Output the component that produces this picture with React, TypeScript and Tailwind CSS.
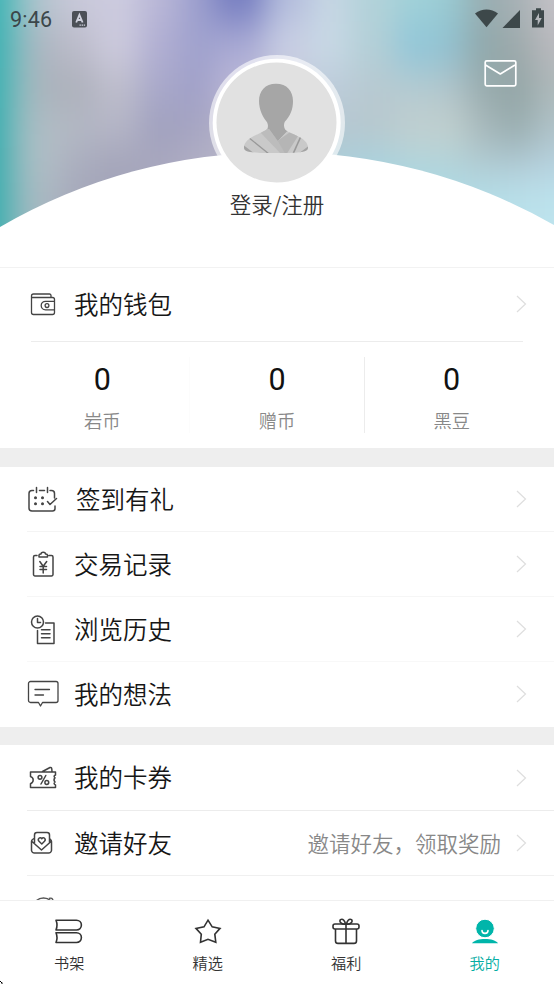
import React from "react";

const CJK = "font-['Noto_Sans_CJK_SC','Noto_Sans',sans-serif] font-[350]";

// Colour samples of the blurred cover picture, one list per horizontal band.
const columns = [-30, 8, 30, 60, 95, 140, 180, 215, 265, 310, 350, 395, 440, 468, 500, 535, 590];
const bands: { y: number; h: number; colors: string[] }[] = [
  { y: -60, h: 82, colors: ["#35b2b2", "#86c2c5", "#b9c5d0", "#c9c9da", "#cccbdf", "#b9b7d7", "#9c9fce", "#747cc0", "#b3bcdc", "#c6d6e4", "#b2d2d9", "#a0d1d8", "#98c8d0", "#98adb1", "#a7b1b5", "#c5c2c7"] },
  { y: 22, h: 46, colors: ["#35b0b1", "#86bcc0", "#b0b6c2", "#bcbcca", "#cccadd", "#b0aed2", "#9fa1cd", "#a9aad4", "#c9cfe4", "#c8d9e5", "#b3cfd7", "#90c6d8", "#92bfcd", "#8fa7aa", "#9eaaac", "#bab9be"] },
  { y: 68, h: 40, colors: ["#35afb0", "#8abcbf", "#abb3bc", "#acafba", "#bdbdcb", "#a8a8ca", "#a0a0c8", "#bdb9d7", "#c4c6d8", "#bdccdb", "#b8c9d1", "#b4cad1", "#b0c3c9", "#98abad", "#93a5a6", "#adb8b9"] },
  { y: 108, h: 40, colors: ["#35adae", "#92bcc0", "#b1bdc5", "#b3b8c4", "#b4b5c6", "#a0a0be", "#a6a5c2", "#b6b4c8", "#b8bccc", "#b4c6d1", "#b7c8ce", "#c1cfcf", "#c1cfcd", "#a7b8bb", "#99adaf", "#b0c3c9"] },
  { y: 148, h: 34, colors: ["#35acad", "#92bbbf", "#b2bec6", "#aaadbe", "#a3a4b9", "#a9a8be", "#b2b0c4", "#b5b5c7", "#b1c6d3", "#abced9", "#a9d3df", "#b0d5dd", "#b2d3da", "#b0ccd4", "#b2ccd7", "#b6d2e0"] },
  { y: 182, h: 110, colors: ["#35adad", "#8fbabf", "#acb8c2", "#a5a8ba", "#a5a6ba", "#a9a8be", "#b2b0c4", "#b5b5c7", "#b1c6d3", "#abced9", "#a9d7e2", "#aad9e4", "#b0dce7", "#b4dfe9", "#b9e1eb", "#bde3ed"] },
];

function Cover() {
  return (
    <svg className="block h-[267px] w-full" viewBox="0 0 554 267" preserveAspectRatio="none">
      <defs>
        <filter id="soft" x="-10%" y="-20%" width="120%" height="140%" colorInterpolationFilters="sRGB">
          <feGaussianBlur stdDeviation="15 19" />
        </filter>
      </defs>
      <rect width="554" height="267" fill="#b4c4d0" />
      <g filter="url(#soft)">
        {bands.map((b) =>
          b.colors.map((c, i) => {
            const first = i === 0 ? 60 : 0;
            const last = i === b.colors.length - 1 ? 60 : 0;
            return (
              <rect
                key={`${b.y}-${i}`}
                x={columns[i] - first}
                y={b.y}
                width={columns[i + 1] - columns[i] + 0.5 + first + last}
                height={b.h + 0.5}
                fill={c}
              />
            );
          })
        )}
      </g>
      <path d="M0 227A555 555 0 0 1 554 225V267H0Z" fill="#fff" />
    </svg>
  );
}

function Avatar() {
  return (
    <svg className="h-[136px] w-[136px]" viewBox="0 0 136 136">
      <defs>
        <clipPath id="robe">
          <path d="M58 74C53 79 35 82 35 92.500C35 97 41 98 67 98C93 98 99 97 99 92.500C99 82 80 79 75 74Z" />
        </clipPath>
      </defs>
      <circle cx="68" cy="68" r="68" fill="#fff" fillOpacity=".6" />
      <circle cx="67.7" cy="67.7" r="64" fill="#fff" />
      <circle cx="67.5" cy="67.5" r="60" fill="#e1e1e1" />
      <path d="M67 28.700C56 28.700 50 36 50 46C50 55 54 62 57.500 66.500C60 70 59 74 57 76L68.700 88L79 77C75 75 74 70 76 66.500C81 61 84 55 84 46C84 36 78 28.700 67 28.700Z" fill="#a6a6a6" />
      <g clipPath="url(#robe)">
        <path d="M30 72H58L68.700 85.700L80 74H102V102H30Z" fill="#c9c9c9" />
        <path d="M50 76L59 72L80 100H73Z" fill="#bcbcbc" />
        <path d="M68.700 85.700L84 75L91 78L77 100Z" fill="#b5b5b5" />
        <path d="M59 72L68.700 85.700L78 76V72Z" fill="#a6a6a6" />
        <path d="M39 82L60 99" fill="none" stroke="#999" strokeWidth="1.300" />
        <path d="M92.500 80L84 99" fill="none" stroke="#999" strokeWidth="1.600" />
        <path d="M33 89L46 99H33ZM101 90L89 99H101Z" fill="#a3a3a3" />
      </g>
    </svg>
  );
}

function StatusBar() {
  return (
    <div className="flex h-[38px] items-center pl-[10px] pr-[9px] text-[#3c474a]">
      <span className="w-[42px] pt-[2px] font-[Roboto,sans-serif] text-[21.5px] font-normal leading-none tracking-[0.2px]">9:46</span>
      <svg className="ml-[20px] h-[17px] w-[15px]" viewBox="0 0 15 17">
        <rect width="15" height="16.5" rx="2" fill="#4c5057" />
        <path d="M4.2 11.5L7.4 3.8L10.6 11.5M5.4 9H9.4" fill="none" stroke="#d0d2de" strokeWidth="1.8" />
        <path d="M7.5 14.2h1.4m.7 0H11m.7 0h1.4" stroke="#d0d2de" strokeWidth="1.3" />
      </svg>
      <svg className="ml-auto h-[22px] w-[71px]" viewBox="0 0 71 22" fill="#3d484a">
        <path d="M1 5.6C8 0 17 0 24 5.6L12.5 19.3Z" />
        <path d="M46 2V20H28.5Z" />
        <path fillRule="evenodd" d="M62 .3h5v2h3V19.5H58V2.300h4ZM65 5l-4 7h2.700v5.500l4-7.500h-2.700Z" />
      </svg>
    </div>
  );
}

function Line({ children, w = 32, h = 32, sw = 1.5 }: { children: React.ReactNode; w?: number; h?: number; sw?: number }) {
  return (
    <svg width={w} height={h} viewBox={`0 0 ${w} ${h}`} fill="none" stroke="#444" strokeWidth={sw} strokeLinecap="round" strokeLinejoin="round">
      {children}
    </svg>
  );
}

const icons = {
  wallet: (
    <Line sw={1.3}>
      <path d="M24 9.500V7.500a1.500 1.500 0 0 0-1.500-1.500H6.500a2 2 0 0 0-2 2V24.500a2 2 0 0 0 2 2H25.500a2 2 0 0 0 2-2V11.500A2 2 0 0 0 25.500 9.500H5M27.500 13.300H18.500a4.300 4.300 0 0 0 0 8.600H27.500" />
      <circle cx="20" cy="17.600" r="1.900" />
    </Line>
  ),
  calendar: (
    <Line sw={1.500}>
      <path d="M6.500 7.500H5A3 3 0 0 0 2 10.500V25a3 3 0 0 0 3 3H25.500a2.500 2.500 0 0 0 2.500-2.500V23M27.500 15V10.500A3 3 0 0 0 24.500 7.500H23M12.500 7.500H17.500M9.500 4.500V9.500M20.500 4.500V9.500M20.500 18.500L23 21.500L29.500 15.500" />
      <path d="M8.500 14.700h.01M15.500 14.700h.01M8.500 20.700h.01M15.500 20.700h.01" strokeWidth="3" />
    </Line>
  ),
  clipboard: (
    <Line>
      <path d="M10 7.500H8A1.500 1.500 0 0 0 6.500 9V26.500A1.500 1.500 0 0 0 8 28H24.500A1.500 1.500 0 0 0 26 26.500V9A1.500 1.500 0 0 0 24.500 7.500H22M12 9H20.500V7C20.500 6 19.500 6 18.500 6C18.500 3.500 14 3.500 14 6C13 6 12 6 12 7ZM12.800 13.500L16.200 18.200L19.700 13.500M16.200 18.200V25M13 18.500H19.500M13 21.500H19.500" />
    </Line>
  ),
  history: (
    <Line>
      <circle cx="10.500" cy="9" r="6" />
      <path d="M10.500 5.500V9.500H13.500M18.500 10H27V30.500H10.500V17.500M14.500 16.800H23M14.500 20.800H23M14.500 24.800H23" />
    </Line>
  ),
  comment: (
    <Line sw={1.300}>
      <path d="M3.500 3.500H29A2 2 0 0 1 31 5.500V22.500A2 2 0 0 1 29 24.500H15.500L13.500 28L11.500 24.500H3.500A2 2 0 0 1 1.500 22.500V5.500A2 2 0 0 1 3.500 3.500ZM8 11.500H22.500M8 17H16.500" />
    </Line>
  ),
  coupon: (
    <Line>
      <path d="M3.500 10H28.500V13Q26 14 28 15.800Q26 18 28 20Q26 22 28.500 23V25.500H3.500V21.800Q6.200 20.500 6.200 18Q6.200 15.500 3.500 14.500V10ZM15.500 9.500L23 5.500Q24.500 5 24.800 7L25 9.500M18.800 13.500L14 22" />
      <circle cx="13" cy="15.300" r="1.900" />
      <circle cx="19.800" cy="20.500" r="1.900" />
    </Line>
  ),
  invite: (
    <Line>
      <path d="M7.500 15.500V8A2.500 2.500 0 0 1 10 5.500H20A2.500 2.500 0 0 1 22.500 8V15.500M7 11.500L5.500 12.500Q4.500 13.500 4.500 14.500V23.500A3 3 0 0 0 7.500 26H21.500A3 3 0 0 0 24.500 23.500V14.500Q24.500 13.500 23 12L22.500 11.500M5 14.500L14.500 23L24 14.500M14.800 17L12 14.300C10 12 13 9.300 14.800 11.700C16.500 9.300 19.500 12 17.500 14.300Z" />
    </Line>
  ),
};

function Chevron() {
  return (
    <svg className="h-[18px] w-[11px] shrink-0" viewBox="0 0 11 18" fill="none" stroke="#dedede" strokeWidth="1.2">
      <path d="M1 1L9.500 9L1 17" />
    </svg>
  );
}

function Row({ icon, label, hint, border, nudge }: { icon: React.ReactNode; label: string; hint?: string; border?: string; nudge?: boolean }) {
  return (
    <div className="h-full pl-[27px]">
      <div className={`flex h-full items-center border-b pr-[27px] ${border ?? "border-transparent"}`}>
        {icon}
        <span className={`text-[24.500px] leading-none text-[#161616] ${nudge ? "ml-[17px]" : "ml-[15px]"}`}>{label}</span>
        <span className="ml-auto mr-[15px] text-[21.500px] leading-none text-[#888]">{hint}</span>
        <Chevron />
      </div>
    </div>
  );
}

function Stat({ label, divider }: { label: string; divider?: string }) {
  return (
    <div className={`flex h-[76px] flex-1 flex-col items-center border-r ${divider ?? "border-transparent"}`}>
      <span className="mt-[7px] font-[Roboto,sans-serif] text-[30.500px] font-normal leading-[32px] text-[#111]">0</span>
      <span className="mt-[14px] text-[18.300px] leading-[20px] text-[#888]">{label}</span>
    </div>
  );
}

function Tab({ label, active, children }: { label: string; active?: boolean; children: React.ReactNode }) {
  return (
    <div className="flex flex-1 flex-col items-center pt-[15px]">
      <svg width="30" height="30" viewBox="0 0 30 30" fill="none" stroke="#333" strokeWidth="1.600" strokeLinejoin="round">
        {children}
      </svg>
      <span className={`mt-[7px] text-[15.200px] leading-[18px] ${active ? "text-[#05ada3]" : "text-[#333]"}`}>{label}</span>
    </div>
  );
}

export default function App() {
  return (
    <div className={`relative flex h-[984px] w-[554px] flex-col overflow-hidden bg-white ${CJK}`}>
      <header className="relative h-[268px] shrink-0 border-b border-[#f2f2f2]">
        <Cover />
        <div className="absolute inset-x-0 top-0">
          <StatusBar />
          <svg className="absolute left-[484px] top-[59px] h-[29px] w-[33px]" viewBox="0 0 33 29" fill="none" stroke="#fff" strokeWidth="1.700" strokeLinejoin="round">
            <rect x="1.200" y="1.800" width="30.600" height="25" rx="1.500" />
            <path d="M1.500 6L16.300 15L31 6" />
          </svg>
        </div>
        <div className="absolute inset-x-0 top-[55px] flex flex-col items-center">
          <Avatar />
          <span className="mt-[2px] text-[21.500px] leading-[22px] text-[#333]">登录/注册</span>
        </div>
      </header>

      <section className="h-[180px] shrink-0">
        <div className="h-[73px]">
          <Row icon={icons.wallet} label="我的钱包" />
        </div>
        <div className="ml-[31px] mr-[31px] h-px bg-[#ececec]" />
        <div className="flex pl-[15.500px] pr-[14.500px] pt-[15px]">
          <Stat label="岩币" divider="border-[#fcfcfc]" />
          <Stat label="赠币" divider="border-[#ececec]" />
          <Stat label="黑豆" />
        </div>
      </section>

      <section className="h-[297px] shrink-0 border-y-[18px] border-t-[19px] border-[#eee]">
        <div className="h-[65px]"><Row icon={icons.calendar} label="签到有礼" border="border-[#f4f4f4]" nudge /></div>
        <div className="h-[65px]"><Row icon={icons.clipboard} label="交易记录" border="border-[#f6f6f6]" /></div>
        <div className="h-[65px]"><Row icon={icons.history} label="浏览历史" border="border-[#f8f8f8]" /></div>
        <div className="h-[65px]"><Row icon={icons.comment} label="我的想法" /></div>
      </section>

      <section className="min-h-0 flex-1 overflow-hidden">
        <div className="h-[66px]"><Row icon={icons.coupon} label="我的卡券" border="border-[#ececec]" /></div>
        <div className="h-[65px]"><Row icon={icons.invite} label="邀请好友" hint="邀请好友，领取奖励" border="border-[#f0f0f0]" /></div>
        <svg className="ml-[35px] mt-[21px] block" width="20" height="20" viewBox="0 0 20 20" fill="none" stroke="#555" strokeWidth="1.400">
          <path d="M1 4C5 0 12 0 16 4M14 1.500C16 .5 18 1.500 18 4" />
        </svg>
      </section>

      <nav className="flex h-[84px] shrink-0 border-t border-[#f0f0f0] bg-white">
        <Tab label="书架">
          <path d="M2 4.200H22.500A4.900 4.900 0 0 1 22.500 14H2Q4 9 2 4.200ZM2 16.700H22.500A4.900 4.900 0 0 1 22.500 26.500H2Q4 21.500 2 16.700Z" />
        </Tab>
        <Tab label="精选">
          <path d="M15 4.200L19.200 10.900L27 12.400L21.800 18.200L22.800 26.200L15 23.300L7.500 26.200L8.300 18.200L3 12.400L11 10.900Z" strokeLinejoin="miter" />
        </Tab>
        <Tab label="福利">
          <rect x="2" y="8" width="26" height="5" rx="2" />
          <path d="M4.500 13V25A2.500 2.500 0 0 0 7 27.400H23A2.500 2.500 0 0 0 25.500 25V13M15 8V27.400M14.500 8C11 9 7.500 5.500 9.500 3.700C12 2 14 5.500 14.500 8M15.500 8C16 5.500 18 2 20.500 3.700C22.500 5.500 19 9 15.500 8" />
        </Tab>
        <Tab label="我的" active>
          <path d="M2 27.300C5.500 21.500 24.500 21.500 28 27.300Z" stroke="none" fill="#00b5aa" />
          <circle cx="15" cy="12.500" r="9.300" fill="#00b5aa" stroke="#fff" strokeWidth="1" />
          <path d="M12 14.500C12 18.300 18 18.300 18 14.500" stroke="#fff" strokeLinecap="round" />
        </Tab>
      </nav>
      <svg className="absolute bottom-0 left-0" width="3" height="4" viewBox="0 0 3 4">
        <path d="M0 1.500h1M1 2.500h1v1.500" fill="none" stroke="#000" />
      </svg>
    </div>
  );
}
